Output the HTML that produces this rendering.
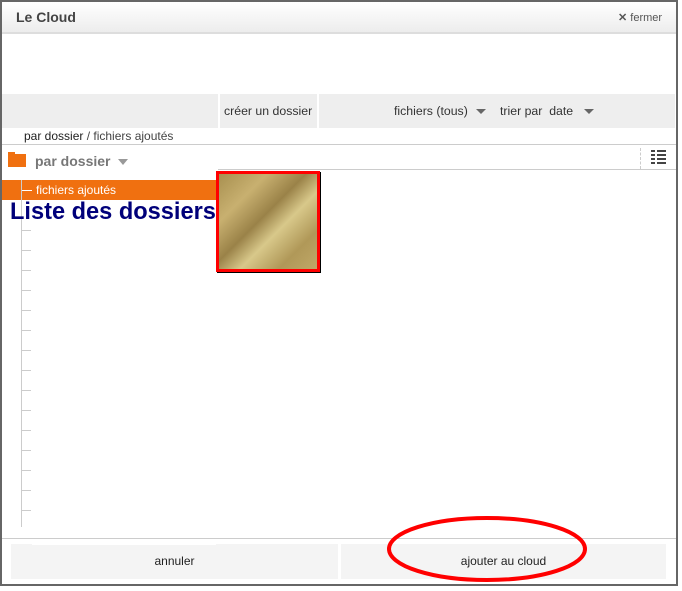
<!DOCTYPE html>
<html><head><meta charset="utf-8"><style>
*{margin:0;padding:0;box-sizing:border-box}
body{width:682px;height:591px;background:#fff;font-family:"Liberation Sans",sans-serif;position:relative;overflow:hidden}
.a{position:absolute}
</style></head><body>
<div class="a" style="left:0;top:0;width:678px;height:586px;border:2px solid #666;background:#fff"></div>
<div class="a" style="left:2px;top:2px;width:674px;height:31px;background:linear-gradient(#fff,#ececec)"></div>
<div class="a" style="left:2px;top:32px;width:674px;height:2px;background:#ddd"></div>
<div class="a" style="left:16px;top:9px;font-size:14px;font-weight:bold;color:#444">Le Cloud</div>
<div class="a" style="left:618px;top:11px;font-size:11px;color:#555"><span style="font-size:11px;color:#555;font-weight:bold">✕</span> fermer</div>
<div class="a" style="left:2px;top:94px;width:673px;height:34px;background:#eee"></div>
<div class="a" style="left:218px;top:94px;width:2px;height:34px;background:#fff"></div>
<div class="a" style="left:317px;top:94px;width:2px;height:34px;background:#fff"></div>
<div class="a" style="left:224px;top:104px;font-size:12.3px;color:#333">créer un dossier</div>
<div class="a" style="left:394px;top:104px;font-size:12.3px;color:#333">fichiers (tous)</div>
<div class="a" style="left:476px;top:109px;border:5px solid transparent;border-top:5px solid #666;border-bottom:0"></div>
<div class="a" style="left:500px;top:104px;font-size:12.3px;color:#333">trier par &nbsp;date</div>
<div class="a" style="left:584px;top:109px;border:5px solid transparent;border-top:5px solid #666;border-bottom:0"></div>
<div class="a" style="left:24px;top:129px;font-size:12px;color:#222">par dossier <span style="color:#444">/ fichiers ajoutés</span></div>
<div class="a" style="left:2px;top:144px;width:674px;height:1px;background:#ccc"></div>
<div class="a" style="left:218px;top:169px;width:458px;height:1px;background:#ccc"></div>
<div class="a" style="left:640px;top:148px;width:0;height:21px;border-left:1px dashed #ccc"></div>
<div class="a" style="left:651px;top:150px;width:15px;height:14px;background:repeating-linear-gradient(#444 0 2px,transparent 2px 4px)"></div>
<div class="a" style="left:655px;top:150px;width:2px;height:14px;background:#fff"></div>
<div class="a" style="left:8px;top:154px;width:18px;height:13px;background:#f07010"></div>
<div class="a" style="left:8px;top:152px;width:7px;height:3px;background:#f07010"></div>
<div class="a" style="left:35px;top:153px;font-size:14px;font-weight:bold;color:#777">par dossier</div>
<div class="a" style="left:118px;top:159px;border:5px solid transparent;border-top:6px solid #999;border-bottom:0"></div>
<div class="a" style="left:2px;top:180px;width:214px;height:20px;background:#f07010"></div>
<div class="a" style="left:21px;top:180px;width:1px;height:347px;background:#ccc"></div>
<div class="a" style="left:22px;top:190px;width:10px;height:1px;background:#fff"></div>
<div class="a" style="left:36px;top:183px;font-size:12px;color:#fff">fichiers ajoutés</div>
<div class="a" style="left:22px;top:230px;width:9px;height:300px;background:repeating-linear-gradient(transparent 0 0,#ccc 0 1px,transparent 1px 20px)"></div>
<div class="a" style="left:10px;top:199px;font-size:23.6px;font-weight:bold;color:#00007a">Liste des dossiers</div>
<div class="a" style="left:216px;top:171px;width:104px;height:101px;border:3px solid #f00;background:linear-gradient(135deg,#a89050 0%,#c8b070 25%,#9a8248 45%,#d8c88a 60%,#b09858 80%,#c0a868 100%);box-shadow:1px 1px 0 #000"></div>
<div class="a" style="left:2px;top:538px;width:674px;height:1px;background:#ccc"></div>
<div class="a" style="left:11px;top:544px;width:327px;height:35px;background:#f4f4f4"></div>
<div class="a" style="left:341px;top:544px;width:325px;height:35px;background:#f4f4f4"></div>
<div class="a" style="left:32px;top:539px;width:184px;height:6px;background:#fff"></div>
<div class="a" style="left:11px;top:554px;width:327px;text-align:center;font-size:12px;color:#222">annuler</div>
<div class="a" style="left:341px;top:554px;width:325px;text-align:center;font-size:12px;color:#222">ajouter au cloud</div>
<svg class="a" style="left:0;top:0" width="682" height="591"><ellipse cx="487" cy="549" rx="98" ry="31" fill="none" stroke="#f00" stroke-width="4"/></svg>
</body></html>
